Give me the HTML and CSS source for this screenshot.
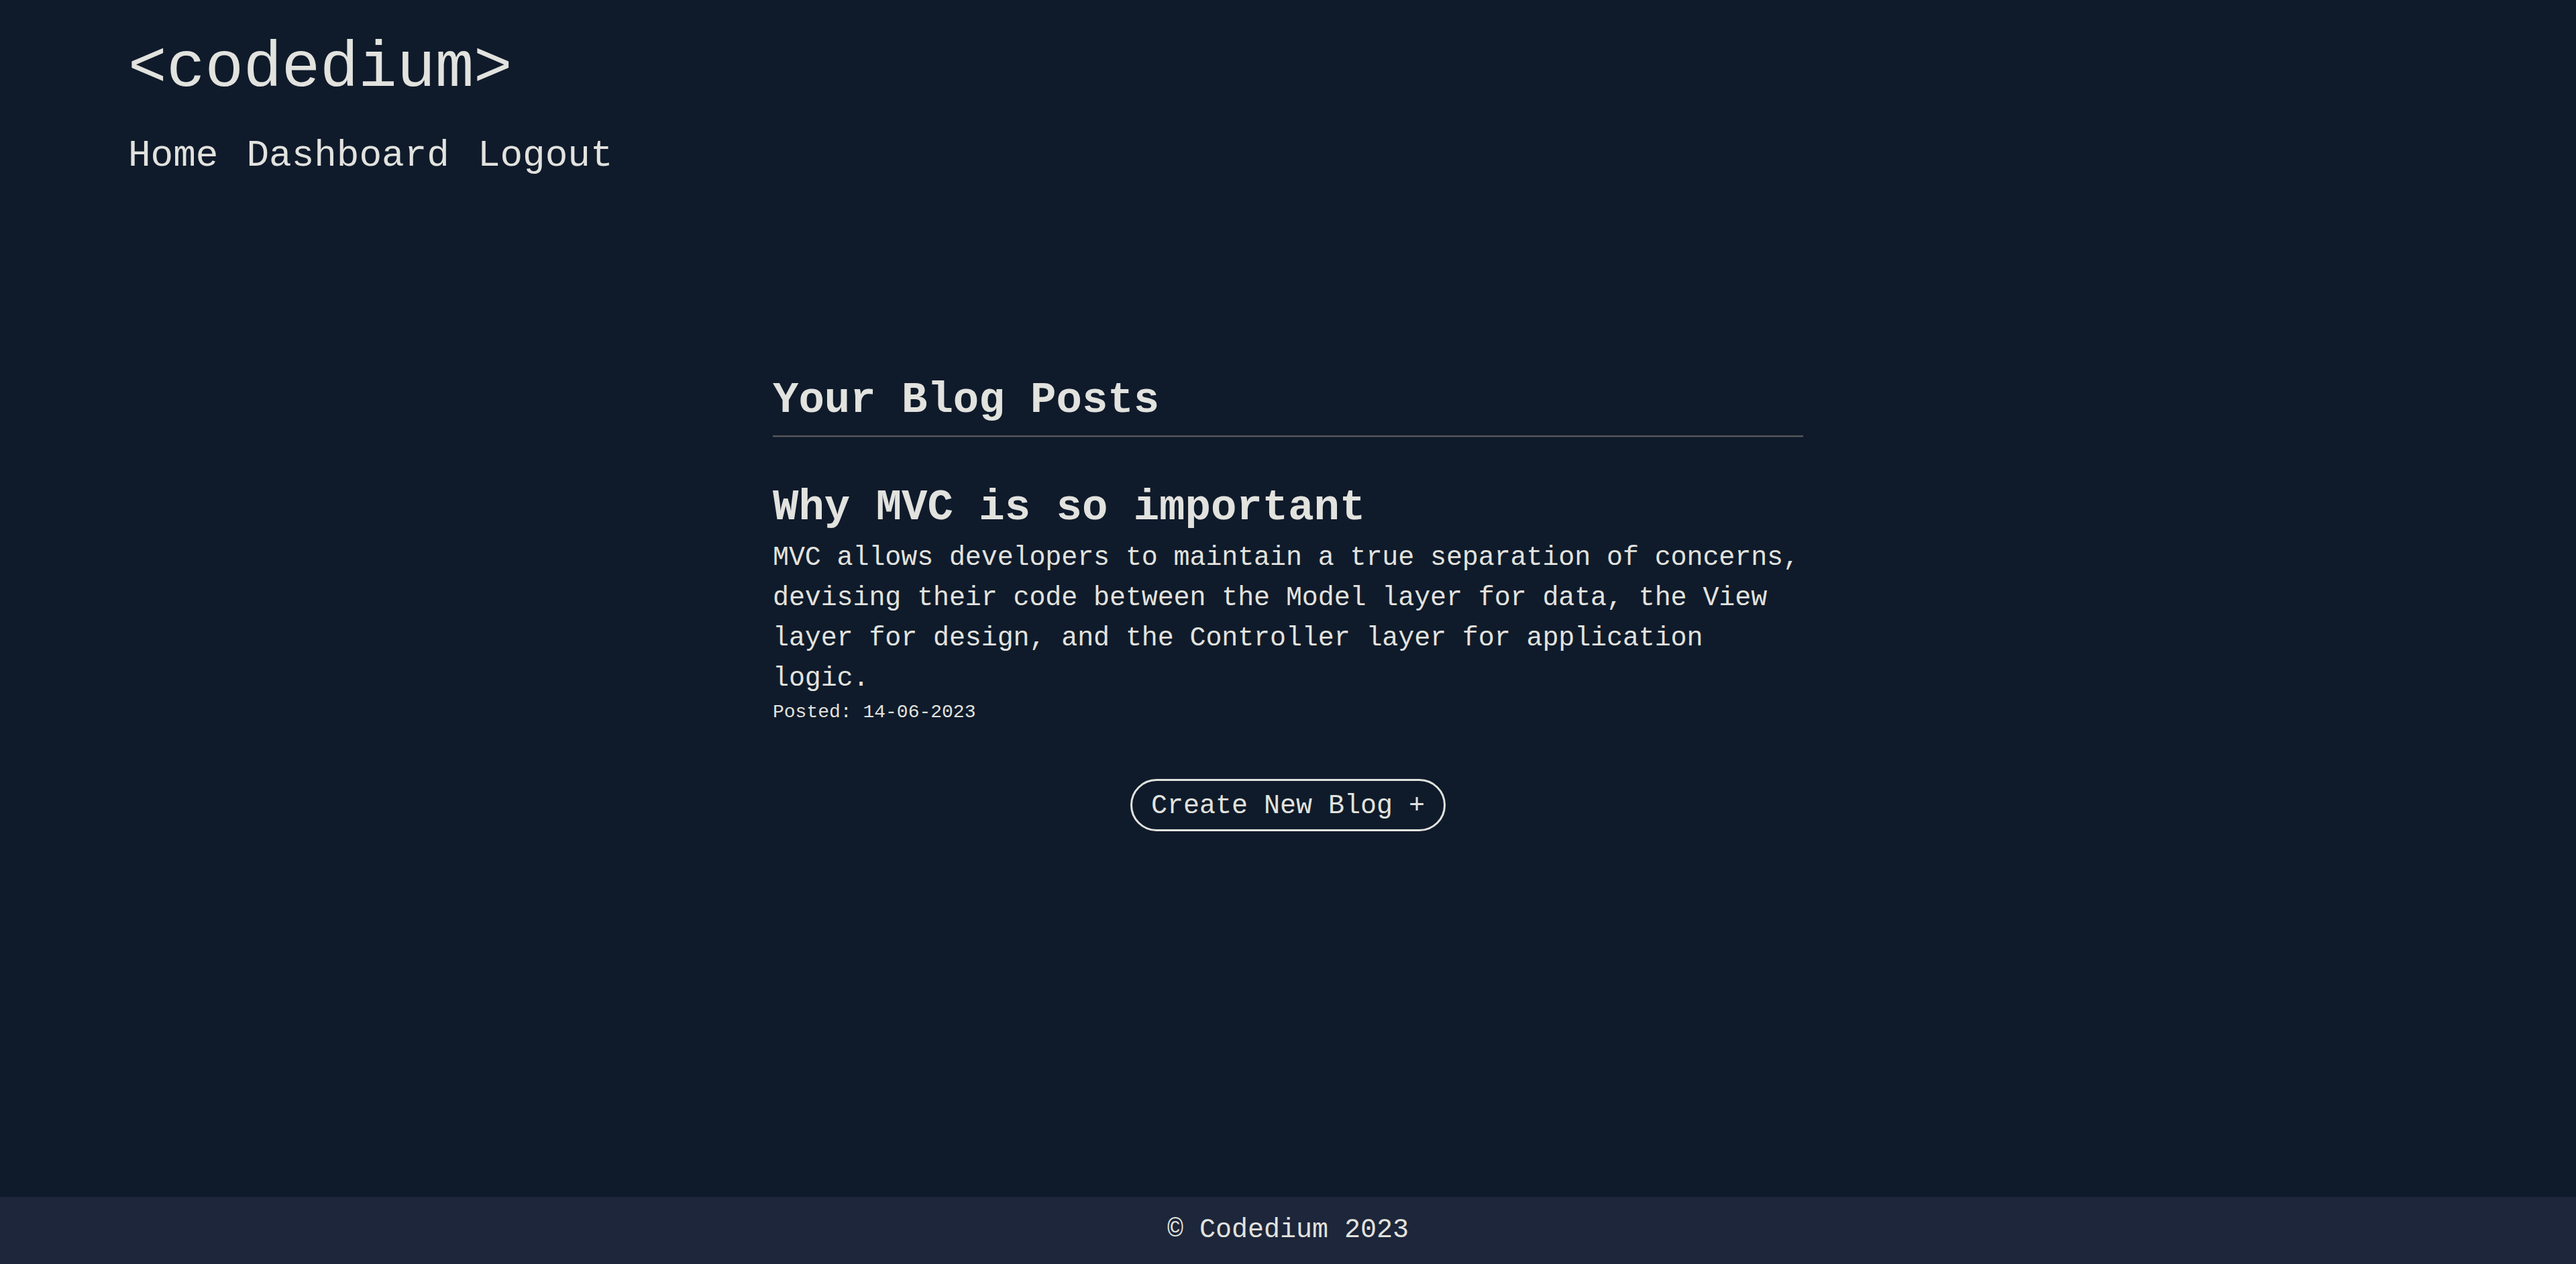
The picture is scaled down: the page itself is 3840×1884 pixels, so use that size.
FILE: index.html
```html
<!DOCTYPE html>
<html lang="en">
<head>
<meta charset="utf-8">
<title>Codedium - Dashboard</title>
<link rel="stylesheet" href="styles.css">
</head>
<body>
  <header class="site-header">
    <h1 class="logo">&lt;codedium&gt;</h1>
    <nav class="nav">
      <a href="#" class="nav-link">Home</a>
      <a href="#" class="nav-link">Dashboard</a>
      <a href="#" class="nav-link">Logout</a>
    </nav>
  </header>

  <main class="dashboard">
    <h2 class="section-title">Your Blog Posts</h2>
    <hr class="divider">
    <article class="post">
      <h3 class="post-title">Why MVC is so important</h3>
      <p class="post-body">MVC allows developers to maintain a true separation of concerns, devising their code between the Model layer for data, the View layer for design, and the Controller layer for application logic.</p>
      <p class="post-date">Posted: 14-06-2023</p>
    </article>
    <div class="actions">
      <button class="create-btn" type="button">Create New Blog +</button>
    </div>
  </main>

  <footer class="site-footer">© Codedium 2023</footer>
</body>
</html>
```

FILE: styles.css
```css
html, body {
  margin: 0;
  padding: 0;
}

body {
  min-height: 100vh;
  display: flex;
  flex-direction: column;
  background: #0f1b2b;
  color: #e2e2de;
  font-family: "Liberation Mono", "DejaVu Sans Mono", monospace;
}

.site-header {
  padding: 45px 0 0 191px;
}

.logo {
  margin: 0;
  font-size: 96px;
  line-height: 115px;
  font-weight: normal;
  letter-spacing: -0.4px;
}

.nav {
  display: flex;
  gap: 42px;
  margin-top: 39px;
}

.nav-link {
  color: #e2e2de;
  text-decoration: none;
  font-size: 56px;
  line-height: 67px;
}

.dashboard {
  width: 40%;
  margin: 0 auto;
  padding-top: 293px;
}

.section-title {
  margin: 0;
  font-size: 64px;
  line-height: 77px;
  font-weight: bold;
}

.divider {
  margin: 13px 0 0 0;
  height: 0;
  border: 0;
  border-top: 2px solid #5a5a5a;
  border-bottom: 1px solid #222d3d;
}

.post {
  margin-top: 67px;
}

.post-title {
  margin: 0;
  font-size: 64px;
  line-height: 77px;
  font-weight: bold;
}

.post-body {
  margin: 6px 0 0 0;
  font-size: 40px;
  line-height: 60px;
  letter-spacing: -0.1px;
}

.post-date {
  margin: 3px 0 0 0;
  font-size: 28px;
  line-height: 34px;
}

.actions {
  display: flex;
  justify-content: center;
  margin-top: 82px;
}

.create-btn {
  font-family: "Liberation Mono", "DejaVu Sans Mono", monospace;
  font-size: 40px;
  line-height: 48px;
  color: #e2e2de;
  background: transparent;
  border: 3px solid #e2e2de;
  border-radius: 40px;
  padding: 14px 28px 10px 28px;
  cursor: pointer;
}

.site-footer {
  margin-top: auto;
  height: 100px;
  background: #1d263a;
  display: flex;
  align-items: center;
  justify-content: center;
  font-size: 40px;
  line-height: 48px;
}
```
